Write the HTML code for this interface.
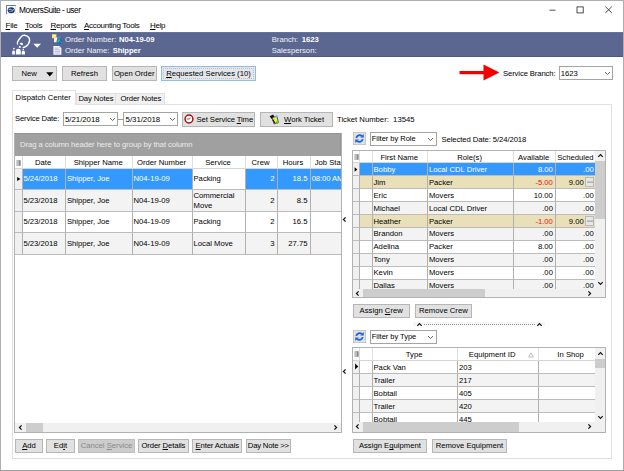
<!DOCTYPE html><html><head><meta charset="utf-8"><title>MoversSuite - user</title><style>
html,body{margin:0;padding:0;}
body{width:624px;height:471px;overflow:hidden;background:#fff;font-family:"Liberation Sans",sans-serif;font-size:7.7px;color:#000;position:relative;}
.a{position:absolute;box-sizing:border-box;white-space:nowrap;}
.t{}
u{text-decoration:underline;text-decoration-thickness:0.6px;text-underline-offset:0.8px;}
.btn{background:#e1e1e1;border:0.8px solid #b6b6b6;display:flex;align-items:center;justify-content:center;}
.btn.dis{background:#cccccc;border-color:#bfbfbf;color:#8a8a8a;}
.btn.foc{border:1px solid #8fbbe6;background:#e3e6ea;}
.cell{position:absolute;box-sizing:border-box;border-right:0.7px solid #b0b0b0;border-bottom:0.7px solid #bcbcbc;display:flex;align-items:center;padding:0 2.2px 0 0.8px;overflow:hidden;white-space:nowrap;}
.cell.r{justify-content:flex-end;}
.cell.c{justify-content:center;}
.hd{background:#fff;border-right-color:#dedede !important;border-bottom-color:#d6d6d6 !important;}
.combo{background:#fff;border:0.8px solid #a4a4a4;display:flex;align-items:center;padding-left:0.8px;font-size:7.5px;letter-spacing:-0.03px;}
.sb{background:#f0f0f0;}
.thumb{background:#cdcdcd;}
</style></head><body>
<div class="a " style="left:0px;top:0px;width:624px;height:471px;background:#fff;"></div>
<div class="a " style="left:0px;top:0px;width:624px;height:32px;background:#fff;"></div>
<div class="a " style="left:1px;top:32px;width:622px;height:25px;background:#5b6790;"></div>
<div class="a " style="left:1px;top:56px;width:622px;height:1px;background:#4d5a87;"></div>
<div class="a " style="left:1px;top:32px;width:622px;height:1px;background:#67739c;"></div>
<div class="a " style="left:0px;top:0px;width:624px;height:1px;background:#b0b0b0;"></div>
<div class="a " style="left:0px;top:0px;width:1px;height:471px;background:#b0b0b0;"></div>
<div class="a " style="left:623px;top:0px;width:1px;height:471px;background:#adadad;"></div>
<div class="a " style="left:0px;top:470px;width:624px;height:1px;background:#9c9c9c;"></div>
<svg class="a" style="left:5.6px;top:4.9px" width="10.4" height="9.6" viewBox="0 0 10.4 9.6"><rect x="0.4" y="0.4" width="9.4" height="8.6" fill="#fff" stroke="#c8d2e2" stroke-width="0.5"/><path d="M0.4 9V0.5H9.8" fill="none" stroke="#3a5a8a" stroke-width="0.8"/><ellipse cx="5.2" cy="5.2" rx="3.5" ry="3" fill="#17356a"/><path d="M2.6 4.6Q4.4 3.6 5.4 4.8T8 4.4" fill="none" stroke="#fff" stroke-width="0.8"/><path d="M3 6.4Q5 7 7 6" fill="none" stroke="#dfe8f4" stroke-width="0.5"/></svg>
<div class="a t " style="left:19px;top:4.3px;height:12px;line-height:12px;font-size:8.3px;letter-spacing:-0.45px;color:#000;">MoversSuite - user</div>
<svg class="a" style="left:540px;top:0" width="84" height="21" viewBox="0 0 84 21"><g stroke="#222" stroke-width="0.8" fill="none"><path d="M9.5 10.2H15.5"/><rect x="37" y="6.9" width="6.2" height="6"/><path d="M65.4 6.7L71.8 12.9M71.8 6.7L65.4 12.9"/></g></svg>
<div class="a t " style="left:5.6px;top:20.1px;height:12px;line-height:12px;font-size:8px;letter-spacing:-0.3px;"><u>F</u>ile</div>
<div class="a t " style="left:25px;top:20.1px;height:12px;line-height:12px;font-size:8px;letter-spacing:-0.3px;"><u>T</u>ools</div>
<div class="a t " style="left:50.6px;top:20.1px;height:12px;line-height:12px;font-size:8px;letter-spacing:-0.3px;"><u>R</u>eports</div>
<div class="a t " style="left:84px;top:20.1px;height:12px;line-height:12px;font-size:8px;letter-spacing:-0.3px;"><u>A</u>ccounting Tools</div>
<div class="a t " style="left:150px;top:20.1px;height:12px;line-height:12px;font-size:8px;letter-spacing:-0.3px;"><u>H</u>elp</div>
<svg class="a" style="left:8px;top:32px" width="39" height="26" viewBox="8 32 39 26">
<g fill="none" stroke="#fff" stroke-width="1.4" stroke-linejoin="round"><path d="M17.6 44.6Q16.6 42.6 18.6 40L21.6 36.2Q23.4 34.6 26.2 35.6Q29.8 37.2 29.6 40.6Q29.2 44.2 25.6 46.6Q23.6 47.8 22.6 47.4"/></g>
<g fill="#fff"><ellipse cx="21.4" cy="43.8" rx="1.7" ry="1" transform="rotate(20 21.4 43.8)"/>
<circle cx="19.8" cy="46.9" r="1.05"/><path d="M15.9 54.6V51Q15.9 48.8 18.4 48.8Q20.8 48.8 20.8 51V54.6Z"/>
<circle cx="13.9" cy="48.6" r="0.85"/><path d="M12.2 54.6V51.8Q12.2 50.6 13.6 50.6Q14.9 50.6 14.9 51.8V54.6Z"/>
<circle cx="23.3" cy="49.5" r="0.85"/><path d="M21.7 54.6V52Q21.7 50.8 23.4 50.8Q25 50.8 25 52V54.6Z"/>
<path d="M33.3 43.7H41.1L37.2 47.7Z"/></g></svg>
<svg class="a" style="left:51px;top:33px" width="12" height="23" viewBox="51 33 12 23">
<rect x="54" y="37.4" width="3.4" height="4.8" fill="#f2f4f8"/><rect x="57.4" y="36.4" width="3.6" height="2.2" fill="#4a80d8"/>
<rect x="52" y="34.2" width="4.4" height="4" fill="#f6e36c"/><rect x="53" y="35" width="2" height="1.6" fill="#fdf6b8"/>
<circle cx="59.5" cy="41.5" r="2.9" fill="#2a62c8"/><path d="M57.4 40.6Q58.6 38.8 60.2 39.6Q60.4 41 59.2 41.6Q58.6 43.4 57.6 42.4Z" fill="#3fc04a"/><path d="M60.8 41.2Q62 41.4 61.8 42.8Q61 43.6 60.6 42.6Z" fill="#3fc04a"/>
<path d="M53.4 46H59.4L61.4 48V54.8H53.4Z" fill="#f6f7fb"/><path d="M59.4 46V48H61.4Z" fill="#b8c0d8"/>
<g stroke="#8a90d8" stroke-width="0.6"><path d="M54.6 48.2H58.6M54.6 49.8H60.2M54.6 51.4H60.2M54.6 53H60.2"/></g></svg>
<div class="a t " style="left:65px;top:34px;height:12px;line-height:12px;color:#fff;color:#f2f3f8;">Order Number:</div>
<div class="a t " style="left:119px;top:34px;height:12px;line-height:12px;color:#fff;letter-spacing:-0.1px"><b>N04-19-09</b></div>
<div class="a t " style="left:65px;top:44.8px;height:12px;line-height:12px;color:#fff;color:#f2f3f8;">Order Name:</div>
<div class="a t " style="left:112.7px;top:44.8px;height:12px;line-height:12px;color:#fff;letter-spacing:-0.1px"><b>Shipper</b></div>
<div class="a t " style="left:271.7px;top:34px;height:12px;line-height:12px;color:#fff;color:#f2f3f8;">Branch:</div>
<div class="a t " style="left:301.7px;top:34px;height:12px;line-height:12px;color:#fff;"><b>1623</b></div>
<div class="a t " style="left:271.7px;top:44.8px;height:12px;line-height:12px;color:#fff;color:#f2f3f8;">Salesperson:</div>
<div class="a btn " style="left:12px;top:66.4px;width:44.6px;height:14.4px;"><span></span></div>
<div class="a t " style="left:21.4px;top:67.6px;height:12px;line-height:12px;">New</div>
<svg class="a" style="left:46px;top:71.6px" width="8" height="5" viewBox="0 0 8 5"><path d="M0.2 0.2H7.4L3.8 4.6Z" fill="#000"/></svg>
<div class="a btn " style="left:62px;top:66.4px;width:45px;height:14.4px;"><span>Refresh</span></div>
<div class="a btn " style="left:111.6px;top:66.4px;width:45.2px;height:14.4px;"><span>Open Order</span></div>
<div class="a btn foc" style="left:160.8px;top:65.8px;width:95.4px;height:15.4px;"><span><u>R</u>equested Services (10)</span></div>
<div class="a " style="left:162.6px;top:67.6px;width:91.8px;height:11.8px;border:0.7px dotted #c0c0c0;"></div>
<svg class="a" style="left:458px;top:62px" width="44" height="22" viewBox="0 0 44 22"><path d="M1.5 9V12.2H25.5V18.6L41.4 10.6L25.5 2.6V9Z" fill="#f50000"/></svg>
<div class="a t " style="left:503px;top:67.9px;height:12px;line-height:12px;letter-spacing:-0.12px">Service Branch:</div>
<div class="a combo" style="left:559px;top:66.4px;width:53.6px;height:14.0px;font-size:7.7px;">1623</div>
<svg class="a" style="left:603.6px;top:70.8px" width="7" height="5" viewBox="0 0 7 5"><path d="M1 1L3.5 3.5L6 1" fill="none" stroke="#444" stroke-width="0.8"/></svg>
<div class="a " style="left:11.5px;top:103.6px;width:600.8px;height:355.8px;background:#fff;border:0.8px solid #e0e0e0;"></div>
<div class="a " style="left:75.6px;top:92.8px;width:40.8px;height:11.2px;background:#f0f0f0;border:0.8px solid #e0e0e0;border-bottom:none;"></div>
<div class="a " style="left:116.4px;top:92.8px;width:48.6px;height:11.2px;background:#f0f0f0;border:0.8px solid #e0e0e0;border-bottom:none;border-left:none;"></div>
<div class="a " style="left:11.5px;top:90.4px;width:64.3px;height:14.2px;background:#fff;border:0.8px solid #e0e0e0;border-bottom:none;"></div>
<div class="a t " style="left:15.6px;top:91.6px;height:12px;line-height:12px;">Dispatch Center</div>
<div class="a t " style="left:78.4px;top:92.8px;height:12px;line-height:12px;letter-spacing:-0.1px">Day Notes</div>
<div class="a t " style="left:120.4px;top:92.8px;height:12px;line-height:12px;letter-spacing:-0.1px">Order Notes</div>
<div class="a t " style="left:15px;top:113.4px;height:12px;line-height:12px;letter-spacing:-0.15px">Service Date:</div>
<div class="a combo" style="left:62.8px;top:112px;width:55.4px;height:14.4px;font-size:7.85px;padding-left:1.2px;">5/21/2018</div>
<svg class="a" style="left:108.6px;top:117.2px" width="7" height="5" viewBox="0 0 7 5"><path d="M1 1L3.5 3.5L6 1" fill="none" stroke="#444" stroke-width="0.8"/></svg>
<div class="a " style="left:118.2px;top:119.2px;width:5.2px;height:0.6px;background:#999;"></div>
<div class="a combo" style="left:123.4px;top:112px;width:54.8px;height:14.4px;font-size:7.85px;padding-left:1.2px;">5/31/2018</div>
<svg class="a" style="left:169.2px;top:117.2px" width="7" height="5" viewBox="0 0 7 5"><path d="M1 1L3.5 3.5L6 1" fill="none" stroke="#444" stroke-width="0.8"/></svg>
<div class="a btn " style="left:182.4px;top:112px;width:72.8px;height:14.6px;"><span></span></div>
<svg class="a" style="left:184px;top:114.4px" width="10" height="10" viewBox="0 0 10 10"><circle cx="5" cy="5" r="3.9" fill="#fff" stroke="#a81414" stroke-width="1.5"/><path d="M5 5H2.8M5 5L6.6 4" stroke="#a81414" stroke-width="0.8"/></svg>
<div class="a t " style="left:196.6px;top:113.7px;height:12px;line-height:12px;letter-spacing:-0.1px">Set Service <u>T</u>ime</div>
<div class="a btn " style="left:260px;top:112px;width:72.6px;height:14.6px;"><span></span></div>
<svg class="a" style="left:269px;top:113.6px" width="11" height="11" viewBox="0 0 11 11"><path d="M0.6 2.2L4.2 0.4L5.6 3.2L2.6 5Z" fill="#111"/><path d="M3.2 3.6L8 2.2L9.4 8.6L5 10Z" fill="#ecec50" stroke="#222" stroke-width="0.7"/><circle cx="7.6" cy="2.6" r="1.3" fill="#58c8d8"/><circle cx="8.2" cy="8.6" r="1.4" fill="#6ab848"/><path d="M3.6 5.6L6 9" stroke="#111" stroke-width="1.1"/></svg>
<div class="a t " style="left:284px;top:113.7px;height:12px;line-height:12px;"><u>W</u>ork Ticket</div>
<div class="a t " style="left:337px;top:113.7px;height:12px;line-height:12px;">Ticket Number:&nbsp; 13545</div>
<div class="a " style="left:14px;top:132.8px;width:327.6px;height:300.2px;background:#fff;border:0.8px solid #b2b2b2;overflow:hidden;"></div>
<div class="a " style="left:14.6px;top:133px;width:326.8px;height:23px;background:#a0a0a0;border-top:1px solid #949494;border-right:1px solid #949494;"></div>
<div class="a t " style="left:20px;top:138.8px;height:12px;line-height:12px;color:#ececec;letter-spacing:-0.075px;">Drag a column header here to group by that column</div>
<div class="a" style="left:0;top:0;width:341px;height:433px;overflow:hidden;">
<div class="cell hd c" style="left:14.6px;top:156px;width:8.0px;height:13.4px;background:#fff;padding-top:1.2px;padding:1px 0 0 1.6px;justify-content:flex-start;"></div>
<div class="cell hd c" style="left:22.6px;top:156px;width:43.5px;height:13.4px;background:#fff;padding-top:1.2px;">Date</div>
<div class="cell hd c" style="left:66.1px;top:156px;width:66.6px;height:13.4px;background:#fff;padding-top:1.2px;">Shipper Name</div>
<div class="cell hd c" style="left:132.7px;top:156px;width:60.0px;height:13.4px;background:#fff;padding-top:1.2px;">Order Number</div>
<div class="cell hd c" style="left:192.7px;top:156px;width:53.0px;height:13.4px;background:#fff;padding-top:1.2px;">Service</div>
<div class="cell hd c" style="left:245.7px;top:156px;width:32.0px;height:13.4px;background:#fff;padding-top:1.2px;">Crew</div>
<div class="cell hd c" style="left:277.7px;top:156px;width:33.0px;height:13.4px;background:#fff;padding-top:1.2px;">Hours</div>
<div class="cell hd " style="left:310.7px;top:156px;width:39.3px;height:13.4px;background:#fff;padding-top:1.2px;padding-left:4px;">Job Sta</div>
<div class="cell" style="left:14.6px;top:169.4px;width:8.000000000000002px;height:21.0px;background:#f0f0f0;padding:0;"><svg width="6" height="6" viewBox="0 0 6 6" style="margin-left:1px"><path d="M1.2 0.9L4.4 3L1.2 5.1Z" fill="#000"/></svg></div>
<div class="cell " style="left:22.6px;top:169.4px;width:43.5px;height:21.0px;background:#3399ff;color:#fff;white-space:normal;line-height:9.8px;">5/24/2018</div>
<div class="cell " style="left:66.1px;top:169.4px;width:66.6px;height:21.0px;background:#3399ff;color:#fff;white-space:normal;line-height:9.8px;">Shipper, Joe</div>
<div class="cell " style="left:132.7px;top:169.4px;width:60.0px;height:21.0px;background:#3399ff;color:#fff;white-space:normal;line-height:9.8px;">N04-19-09</div>
<div class="cell " style="left:192.7px;top:169.4px;width:53.0px;height:21.0px;background:#fff;color:#000;white-space:normal;line-height:9.8px;">Packing</div>
<div class="cell r" style="left:245.7px;top:169.4px;width:32.0px;height:21.0px;background:#3399ff;color:#fff;white-space:normal;line-height:9.8px;">2</div>
<div class="cell r" style="left:277.7px;top:169.4px;width:33.0px;height:21.0px;background:#3399ff;color:#fff;white-space:normal;line-height:9.8px;">18.5</div>
<div class="cell " style="left:310.7px;top:169.4px;width:39.3px;height:21.0px;background:#3399ff;color:#fff;white-space:normal;line-height:9.8px;padding-left:1px;letter-spacing:-0.1px;">08:00 AM</div>
<div class="cell" style="left:14.6px;top:190.4px;width:8.000000000000002px;height:21.4px;background:#f0f0f0;padding:0;"></div>
<div class="cell " style="left:22.6px;top:190.4px;width:43.5px;height:21.4px;background:#f3f3f3;color:#000;white-space:normal;line-height:9.8px;">5/23/2018</div>
<div class="cell " style="left:66.1px;top:190.4px;width:66.6px;height:21.4px;background:#f3f3f3;color:#000;white-space:normal;line-height:9.8px;">Shipper, Joe</div>
<div class="cell " style="left:132.7px;top:190.4px;width:60.0px;height:21.4px;background:#f3f3f3;color:#000;white-space:normal;line-height:9.8px;">N04-19-09</div>
<div class="cell " style="left:192.7px;top:190.4px;width:53.0px;height:21.4px;background:#f3f3f3;color:#000;white-space:normal;line-height:9.8px;">Commercial<br>Move</div>
<div class="cell r" style="left:245.7px;top:190.4px;width:32.0px;height:21.4px;background:#f3f3f3;color:#000;white-space:normal;line-height:9.8px;">2</div>
<div class="cell r" style="left:277.7px;top:190.4px;width:33.0px;height:21.4px;background:#f3f3f3;color:#000;white-space:normal;line-height:9.8px;">8.5</div>
<div class="cell " style="left:310.7px;top:190.4px;width:39.3px;height:21.4px;background:#f3f3f3;color:#000;white-space:normal;line-height:9.8px;padding-left:1px;letter-spacing:-0.1px;"></div>
<div class="cell" style="left:14.6px;top:211.8px;width:8.000000000000002px;height:21.5px;background:#f0f0f0;padding:0;"></div>
<div class="cell " style="left:22.6px;top:211.8px;width:43.5px;height:21.5px;background:#fff;color:#000;white-space:normal;line-height:9.8px;">5/23/2018</div>
<div class="cell " style="left:66.1px;top:211.8px;width:66.6px;height:21.5px;background:#fff;color:#000;white-space:normal;line-height:9.8px;">Shipper, Joe</div>
<div class="cell " style="left:132.7px;top:211.8px;width:60.0px;height:21.5px;background:#fff;color:#000;white-space:normal;line-height:9.8px;">N04-19-09</div>
<div class="cell " style="left:192.7px;top:211.8px;width:53.0px;height:21.5px;background:#fff;color:#000;white-space:normal;line-height:9.8px;">Packing</div>
<div class="cell r" style="left:245.7px;top:211.8px;width:32.0px;height:21.5px;background:#fff;color:#000;white-space:normal;line-height:9.8px;">2</div>
<div class="cell r" style="left:277.7px;top:211.8px;width:33.0px;height:21.5px;background:#fff;color:#000;white-space:normal;line-height:9.8px;">16.5</div>
<div class="cell " style="left:310.7px;top:211.8px;width:39.3px;height:21.5px;background:#fff;color:#000;white-space:normal;line-height:9.8px;padding-left:1px;letter-spacing:-0.1px;"></div>
<div class="cell" style="left:14.6px;top:233.3px;width:8.000000000000002px;height:21.4px;background:#f0f0f0;padding:0;"></div>
<div class="cell " style="left:22.6px;top:233.3px;width:43.5px;height:21.4px;background:#f3f3f3;color:#000;white-space:normal;line-height:9.8px;">5/23/2018</div>
<div class="cell " style="left:66.1px;top:233.3px;width:66.6px;height:21.4px;background:#f3f3f3;color:#000;white-space:normal;line-height:9.8px;">Shipper, Joe</div>
<div class="cell " style="left:132.7px;top:233.3px;width:60.0px;height:21.4px;background:#f3f3f3;color:#000;white-space:normal;line-height:9.8px;">N04-19-09</div>
<div class="cell " style="left:192.7px;top:233.3px;width:53.0px;height:21.4px;background:#f3f3f3;color:#000;white-space:normal;line-height:9.8px;">Local Move</div>
<div class="cell r" style="left:245.7px;top:233.3px;width:32.0px;height:21.4px;background:#f3f3f3;color:#000;white-space:normal;line-height:9.8px;">3</div>
<div class="cell r" style="left:277.7px;top:233.3px;width:33.0px;height:21.4px;background:#f3f3f3;color:#000;white-space:normal;line-height:9.8px;">27.75</div>
<div class="cell " style="left:310.7px;top:233.3px;width:39.3px;height:21.4px;background:#f3f3f3;color:#000;white-space:normal;line-height:9.8px;padding-left:1px;letter-spacing:-0.1px;"></div>
</div>
<svg class="a" style="left:16.2px;top:159.6px" width="5" height="6" viewBox="0 0 5 6"><path d="M3.9 0.2V5.8" stroke="#222" stroke-width="0.9"/><path d="M0.4 1H3M0.4 3H3M0.4 5H3" stroke="#555" stroke-width="0.8" fill="none"/></svg>
<div class="a sb" style="left:14.6px;top:422.8px;width:326.4px;height:9.6px;"></div>
<div class="a thumb" style="left:25.8px;top:422.8px;width:17.2px;height:9.6px;"></div>
<svg class="a" style="left:17.6px;top:424.2px" width="5" height="7" viewBox="0 0 5 7"><path d="M3.6 1.3L1.4 3.5L3.6 5.7" fill="none" stroke="#111" stroke-width="1.2"/></svg>
<svg class="a" style="left:333.4px;top:424.2px" width="5" height="7" viewBox="0 0 5 7"><path d="M1.4 1.3L3.6 3.5L1.4 5.7" fill="none" stroke="#111" stroke-width="1.2"/></svg>
<svg class="a" style="left:342.4px;top:215.8px" width="5" height="7" viewBox="0 0 5 7"><path d="M3.6 1.3L1.4 3.5L3.6 5.7" fill="none" stroke="#111" stroke-width="1.2"/></svg>
<svg class="a" style="left:342.4px;top:368px" width="5" height="7" viewBox="0 0 5 7"><path d="M3.6 1.3L1.4 3.5L3.6 5.7" fill="none" stroke="#111" stroke-width="1.2"/></svg>
<svg class="a" style="left:353px;top:132.2px" width="13" height="13" viewBox="0 0 13 13"><rect x="0.3" y="0.3" width="12.4" height="12.4" fill="#e1e1e1" stroke="#b6b6b6" stroke-width="0.7"/><g fill="none" stroke="#1a66dc" stroke-width="1.9"><path d="M3.3 5.9A3.3 3.3 0 0 1 8.9 4.1"/><path d="M9.7 7.1A3.3 3.3 0 0 1 4.1 8.9"/></g><path d="M7.2 5.4L10.9 5.6L10.6 1.9Z" fill="#1a66dc"/><path d="M5.8 7.6L2.1 7.4L2.4 11.1Z" fill="#1a66dc"/></svg>
<div class="a combo" style="left:370px;top:132px;width:66.8px;height:13.6px;">Filter by Role</div>
<svg class="a" style="left:427px;top:136.6px" width="7" height="5" viewBox="0 0 7 5"><path d="M1 1L3.5 3.5L6 1" fill="none" stroke="#444" stroke-width="0.8"/></svg>
<div class="a t " style="left:441.4px;top:134.1px;height:12px;line-height:12px;letter-spacing:-0.08px">Selected Date: 5/24/2018</div>
<div class="a " style="left:351.6px;top:150.0px;width:254.2px;height:148.4px;background:#fff;"></div>
<div class="a" style="left:352px;top:150.4px;width:242.8px;height:138.2px;overflow:hidden;">
<div class="cell hd c" style="left:0px;top:0;width:8.1px;height:13.0px;background:#fff;padding-top:1.6px;padding:1px 0 0 2.6px;justify-content:flex-start;"></div>
<div class="cell hd c" style="left:8.100000000000023px;top:0;width:12.6px;height:13.0px;background:#fff;padding-top:1.6px;"></div>
<div class="cell hd c" style="left:20.69999999999999px;top:0;width:55.4px;height:13.0px;background:#fff;padding-top:1.6px;">First Name</div>
<div class="cell hd c" style="left:76.10000000000002px;top:0;width:85.5px;height:13.0px;background:#fff;padding-top:1.6px;">Role(s)</div>
<div class="cell hd c" style="left:161.60000000000002px;top:0;width:42.5px;height:13.0px;background:#fff;padding-top:1.6px;">Available</div>
<div class="cell hd c" style="left:204.10000000000002px;top:0;width:40.9px;height:13.0px;background:#fff;padding-top:1.6px;">Scheduled</div>
<div class="cell" style="left:0;top:13.0px;width:8.1px;height:12.92px;background:#f0f0f0;padding:0;"><svg width=6 height=7 viewBox="0 0 6 7" style="margin-left:0.8px"><path d="M1.6 1.2L4.4 3.5L1.6 5.8Z" fill="#000"/></svg></div>
<div class="cell " style="left:8.100000000000023px;top:13.0px;width:12.6px;height:12.92px;background:#3399ff;color:#fff;padding-top:0px;"></div>
<div class="cell " style="left:20.69999999999999px;top:13.0px;width:55.4px;height:12.92px;background:#3399ff;color:#fff;padding-top:0px;">Bobby</div>
<div class="cell " style="left:76.10000000000002px;top:13.0px;width:85.5px;height:12.92px;background:#3399ff;color:#fff;padding-top:0px;">Local CDL Driver</div>
<div class="cell r" style="left:161.60000000000002px;top:13.0px;width:42.5px;height:12.92px;background:#3399ff;color:#fff;padding-top:0px;">8.00</div>
<div class="cell r" style="left:204.10000000000002px;top:13.0px;width:40.9px;height:12.92px;background:#3399ff;color:#fff;padding-top:0px;">.00</div>
<div class="cell" style="left:0;top:25.92px;width:8.1px;height:12.92px;background:#f0f0f0;padding:0;"></div>
<div class="cell " style="left:8.100000000000023px;top:25.92px;width:12.6px;height:12.92px;background:#e9e0ba;color:#000;padding-top:0px;"></div>
<div class="cell " style="left:20.69999999999999px;top:25.92px;width:55.4px;height:12.92px;background:#e9e0ba;color:#000;padding-top:0px;">Jim</div>
<div class="cell " style="left:76.10000000000002px;top:25.92px;width:85.5px;height:12.92px;background:#e9e0ba;color:#000;padding-top:0px;">Packer</div>
<div class="cell r" style="left:161.60000000000002px;top:25.92px;width:42.5px;height:12.92px;background:#e9e0ba;color:#000;padding-top:0px;color:#f01010;">-5.00</div>
<div class="cell r" style="left:204.10000000000002px;top:25.92px;width:40.9px;height:12.92px;background:#e9e0ba;color:#000;padding-top:0px;">9.00<span style="display:inline-block;width:9px;height:9.6px;margin-left:1.6px;margin-right:-0.5px;background:#e6e6e6;border:0.6px solid #b8b8b8;box-sizing:border-box;position:relative;"><svg style="position:absolute;left:1.2px;top:2.6px" width="6" height="2" viewBox="0 0 6 2"><circle cx="1" cy="1" r="0.6" fill="#333"/><circle cx="3" cy="1" r="0.6" fill="#333"/><circle cx="5" cy="1" r="0.6" fill="#333"/></svg></span></div>
<div class="cell" style="left:0;top:38.84px;width:8.1px;height:12.92px;background:#f0f0f0;padding:0;"></div>
<div class="cell " style="left:8.100000000000023px;top:38.84px;width:12.6px;height:12.92px;background:#fff;color:#000;padding-top:0px;"></div>
<div class="cell " style="left:20.69999999999999px;top:38.84px;width:55.4px;height:12.92px;background:#fff;color:#000;padding-top:0px;">Eric</div>
<div class="cell " style="left:76.10000000000002px;top:38.84px;width:85.5px;height:12.92px;background:#fff;color:#000;padding-top:0px;">Movers</div>
<div class="cell r" style="left:161.60000000000002px;top:38.84px;width:42.5px;height:12.92px;background:#fff;color:#000;padding-top:0px;">10.00</div>
<div class="cell r" style="left:204.10000000000002px;top:38.84px;width:40.9px;height:12.92px;background:#fff;color:#000;padding-top:0px;">.00</div>
<div class="cell" style="left:0;top:51.76px;width:8.1px;height:12.92px;background:#f0f0f0;padding:0;"></div>
<div class="cell " style="left:8.100000000000023px;top:51.76px;width:12.6px;height:12.92px;background:#f3f3f3;color:#000;padding-top:0px;"></div>
<div class="cell " style="left:20.69999999999999px;top:51.76px;width:55.4px;height:12.92px;background:#f3f3f3;color:#000;padding-top:0px;">Michael</div>
<div class="cell " style="left:76.10000000000002px;top:51.76px;width:85.5px;height:12.92px;background:#f3f3f3;color:#000;padding-top:0px;">Local CDL Driver</div>
<div class="cell r" style="left:161.60000000000002px;top:51.76px;width:42.5px;height:12.92px;background:#f3f3f3;color:#000;padding-top:0px;">.00</div>
<div class="cell r" style="left:204.10000000000002px;top:51.76px;width:40.9px;height:12.92px;background:#f3f3f3;color:#000;padding-top:0px;">.00</div>
<div class="cell" style="left:0;top:64.68px;width:8.1px;height:12.92px;background:#f0f0f0;padding:0;"></div>
<div class="cell " style="left:8.100000000000023px;top:64.68px;width:12.6px;height:12.92px;background:#e9e0ba;color:#000;padding-top:0px;"></div>
<div class="cell " style="left:20.69999999999999px;top:64.68px;width:55.4px;height:12.92px;background:#e9e0ba;color:#000;padding-top:0px;">Heather</div>
<div class="cell " style="left:76.10000000000002px;top:64.68px;width:85.5px;height:12.92px;background:#e9e0ba;color:#000;padding-top:0px;">Packer</div>
<div class="cell r" style="left:161.60000000000002px;top:64.68px;width:42.5px;height:12.92px;background:#e9e0ba;color:#000;padding-top:0px;color:#f01010;">-1.00</div>
<div class="cell r" style="left:204.10000000000002px;top:64.68px;width:40.9px;height:12.92px;background:#e9e0ba;color:#000;padding-top:0px;">9.00<span style="display:inline-block;width:9px;height:9.6px;margin-left:1.6px;margin-right:-0.5px;background:#e6e6e6;border:0.6px solid #b8b8b8;box-sizing:border-box;position:relative;"><svg style="position:absolute;left:1.2px;top:2.6px" width="6" height="2" viewBox="0 0 6 2"><circle cx="1" cy="1" r="0.6" fill="#333"/><circle cx="3" cy="1" r="0.6" fill="#333"/><circle cx="5" cy="1" r="0.6" fill="#333"/></svg></span></div>
<div class="cell" style="left:0;top:77.6px;width:8.1px;height:12.92px;background:#f0f0f0;padding:0;"></div>
<div class="cell " style="left:8.100000000000023px;top:77.6px;width:12.6px;height:12.92px;background:#f3f3f3;color:#000;padding-top:0px;"></div>
<div class="cell " style="left:20.69999999999999px;top:77.6px;width:55.4px;height:12.92px;background:#f3f3f3;color:#000;padding-top:0px;">Brandon</div>
<div class="cell " style="left:76.10000000000002px;top:77.6px;width:85.5px;height:12.92px;background:#f3f3f3;color:#000;padding-top:0px;">Movers</div>
<div class="cell r" style="left:161.60000000000002px;top:77.6px;width:42.5px;height:12.92px;background:#f3f3f3;color:#000;padding-top:0px;">.00</div>
<div class="cell r" style="left:204.10000000000002px;top:77.6px;width:40.9px;height:12.92px;background:#f3f3f3;color:#000;padding-top:0px;">.00</div>
<div class="cell" style="left:0;top:90.52px;width:8.1px;height:12.92px;background:#f0f0f0;padding:0;"></div>
<div class="cell " style="left:8.100000000000023px;top:90.52px;width:12.6px;height:12.92px;background:#fff;color:#000;padding-top:0px;"></div>
<div class="cell " style="left:20.69999999999999px;top:90.52px;width:55.4px;height:12.92px;background:#fff;color:#000;padding-top:0px;">Adelina</div>
<div class="cell " style="left:76.10000000000002px;top:90.52px;width:85.5px;height:12.92px;background:#fff;color:#000;padding-top:0px;">Packer</div>
<div class="cell r" style="left:161.60000000000002px;top:90.52px;width:42.5px;height:12.92px;background:#fff;color:#000;padding-top:0px;">8.00</div>
<div class="cell r" style="left:204.10000000000002px;top:90.52px;width:40.9px;height:12.92px;background:#fff;color:#000;padding-top:0px;">.00</div>
<div class="cell" style="left:0;top:103.44px;width:8.1px;height:12.92px;background:#f0f0f0;padding:0;"></div>
<div class="cell " style="left:8.100000000000023px;top:103.44px;width:12.6px;height:12.92px;background:#f3f3f3;color:#000;padding-top:0px;"></div>
<div class="cell " style="left:20.69999999999999px;top:103.44px;width:55.4px;height:12.92px;background:#f3f3f3;color:#000;padding-top:0px;">Tony</div>
<div class="cell " style="left:76.10000000000002px;top:103.44px;width:85.5px;height:12.92px;background:#f3f3f3;color:#000;padding-top:0px;">Movers</div>
<div class="cell r" style="left:161.60000000000002px;top:103.44px;width:42.5px;height:12.92px;background:#f3f3f3;color:#000;padding-top:0px;">.00</div>
<div class="cell r" style="left:204.10000000000002px;top:103.44px;width:40.9px;height:12.92px;background:#f3f3f3;color:#000;padding-top:0px;">.00</div>
<div class="cell" style="left:0;top:116.36px;width:8.1px;height:12.92px;background:#f0f0f0;padding:0;"></div>
<div class="cell " style="left:8.100000000000023px;top:116.36px;width:12.6px;height:12.92px;background:#fff;color:#000;padding-top:0px;"></div>
<div class="cell " style="left:20.69999999999999px;top:116.36px;width:55.4px;height:12.92px;background:#fff;color:#000;padding-top:0px;">Kevin</div>
<div class="cell " style="left:76.10000000000002px;top:116.36px;width:85.5px;height:12.92px;background:#fff;color:#000;padding-top:0px;">Movers</div>
<div class="cell r" style="left:161.60000000000002px;top:116.36px;width:42.5px;height:12.92px;background:#fff;color:#000;padding-top:0px;">.00</div>
<div class="cell r" style="left:204.10000000000002px;top:116.36px;width:40.9px;height:12.92px;background:#fff;color:#000;padding-top:0px;">.00</div>
<div class="cell" style="left:0;top:129.28px;width:8.1px;height:12.92px;background:#f0f0f0;padding:0;"></div>
<div class="cell " style="left:8.100000000000023px;top:129.28px;width:12.6px;height:12.92px;background:#f3f3f3;color:#000;padding-top:0px;"></div>
<div class="cell " style="left:20.69999999999999px;top:129.28px;width:55.4px;height:12.92px;background:#f3f3f3;color:#000;padding-top:0px;">Dallas</div>
<div class="cell " style="left:76.10000000000002px;top:129.28px;width:85.5px;height:12.92px;background:#f3f3f3;color:#000;padding-top:0px;">Movers</div>
<div class="cell r" style="left:161.60000000000002px;top:129.28px;width:42.5px;height:12.92px;background:#f3f3f3;color:#000;padding-top:0px;">.00</div>
<div class="cell r" style="left:204.10000000000002px;top:129.28px;width:40.9px;height:12.92px;background:#f3f3f3;color:#000;padding-top:0px;">.00</div>
</div>
<div class="a sb" style="left:594.8px;top:150.4px;width:10.6px;height:138.2px;"></div>
<div class="a thumb" style="left:594.8px;top:161px;width:10.6px;height:58px;"></div>
<svg class="a" style="left:596.8px;top:153.4px" width="7" height="5" viewBox="0 0 7 5"><path d="M1.3 3.8L3.5 1.6L5.7 3.8" fill="none" stroke="#111" stroke-width="1.2"/></svg>
<svg class="a" style="left:596.8px;top:281.20000000000005px" width="7" height="5" viewBox="0 0 7 5"><path d="M1.3 1.2L3.5 3.4L5.7 1.2" fill="none" stroke="#111" stroke-width="1.2"/></svg>
<div class="a sb" style="left:352px;top:288.6px;width:253.4px;height:9.4px;"></div>
<div class="a thumb" style="left:363px;top:288.6px;width:122px;height:9.4px;"></div>
<svg class="a" style="left:355.4px;top:289.90000000000003px" width="5" height="7" viewBox="0 0 5 7"><path d="M3.6 1.3L1.4 3.5L3.6 5.7" fill="none" stroke="#111" stroke-width="1.2"/></svg>
<svg class="a" style="left:587.4px;top:289.90000000000003px" width="5" height="7" viewBox="0 0 5 7"><path d="M1.4 1.3L3.6 3.5L1.4 5.7" fill="none" stroke="#111" stroke-width="1.2"/></svg>
<div class="a " style="left:351.6px;top:150.0px;width:254.2px;height:148.4px;border:0.8px solid #b2b2b2;"></div>
<svg class="a" style="left:353.8px;top:154.20000000000002px" width="5" height="6" viewBox="0 0 5 6"><path d="M3.9 0.2V5.8" stroke="#222" stroke-width="0.9"/><path d="M0.4 1H3M0.4 3H3M0.4 5H3" stroke="#555" stroke-width="0.8" fill="none"/></svg>
<div class="a btn " style="left:352.8px;top:303.8px;width:56.8px;height:13.8px;"><span>Assign <u>C</u>rew</span></div>
<div class="a btn " style="left:415px;top:303.8px;width:56.8px;height:13.8px;"><span>Remove Crew</span></div>
<div class="a " style="left:413px;top:322.4px;width:132px;height:3.8px;background:#f6f6f6;"></div>
<div class="a " style="left:424px;top:324px;width:111px;height:0.6px;border-top:0.7px dotted #999;"></div>
<svg class="a" style="left:415.6px;top:321.6px" width="7" height="5" viewBox="0 0 7 5"><path d="M1.3 3.8L3.5 1.6L5.7 3.8" fill="none" stroke="#111" stroke-width="1.2"/></svg>
<svg class="a" style="left:536.4px;top:321.6px" width="7" height="5" viewBox="0 0 7 5"><path d="M1.3 3.8L3.5 1.6L5.7 3.8" fill="none" stroke="#111" stroke-width="1.2"/></svg>
<svg class="a" style="left:353px;top:330.4px" width="13" height="13" viewBox="0 0 13 13"><rect x="0.3" y="0.3" width="12.4" height="12.4" fill="#e1e1e1" stroke="#b6b6b6" stroke-width="0.7"/><g fill="none" stroke="#1a66dc" stroke-width="1.9"><path d="M3.3 5.9A3.3 3.3 0 0 1 8.9 4.1"/><path d="M9.7 7.1A3.3 3.3 0 0 1 4.1 8.9"/></g><path d="M7.2 5.4L10.9 5.6L10.6 1.9Z" fill="#1a66dc"/><path d="M5.8 7.6L2.1 7.4L2.4 11.1Z" fill="#1a66dc"/></svg>
<div class="a combo" style="left:370px;top:330px;width:66.8px;height:13.8px;">Filter by Type</div>
<svg class="a" style="left:427px;top:334.8px" width="7" height="5" viewBox="0 0 7 5"><path d="M1 1L3.5 3.5L6 1" fill="none" stroke="#444" stroke-width="0.8"/></svg>
<div class="a " style="left:351.6px;top:347.20000000000005px;width:254.2px;height:86.0px;background:#fff;"></div>
<div class="a" style="left:352px;top:347.6px;width:242.8px;height:74.4px;overflow:hidden;">
<div class="cell hd c" style="left:0px;top:0;width:8.1px;height:13.2px;background:#fff;padding-top:1.6px;padding:1px 0 0 2.6px;justify-content:flex-start;"></div>
<div class="cell hd c" style="left:8.100000000000023px;top:0;width:12.6px;height:13.2px;background:#fff;padding-top:1.6px;"></div>
<div class="cell hd c" style="left:20.69999999999999px;top:0;width:85.4px;height:13.2px;background:#fff;padding-top:1.6px;">Type</div>
<div class="cell hd c" style="left:106.10000000000002px;top:0;width:80.5px;height:13.2px;background:#fff;padding-top:1.6px;"><span style="margin-right:10px">Equipment ID</span><svg class="a" style="right:3.4px;top:4.4px" width="6" height="6" viewBox="0 0 6 6"><path d="M0.6 5L3 0.8L5.4 5Z" fill="none" stroke="#999" stroke-width="0.6"/></svg></div>
<div class="cell hd c" style="left:186.60000000000002px;top:0;width:66.4px;height:13.2px;background:#fff;padding-top:1.6px;">In Shop</div>
<div class="cell" style="left:0;top:13.2px;width:8.1px;height:13.05px;background:#f0f0f0;padding:0;"><svg width=6 height=7 viewBox="0 0 6 7" style="margin-left:1.6px"><path d="M1.2 0.3L4.7 3.5L1.2 6.7Z" fill="#000"/></svg></div>
<div class="cell " style="left:8.100000000000023px;top:13.2px;width:12.6px;height:13.05px;background:#fff;color:#000;padding-top:0.9px;"></div>
<div class="cell " style="left:20.69999999999999px;top:13.2px;width:85.4px;height:13.05px;background:#fff;color:#000;padding-top:0.9px;">Pack Van</div>
<div class="cell " style="left:106.10000000000002px;top:13.2px;width:80.5px;height:13.05px;background:#fff;color:#000;padding-top:0.9px;">203</div>
<div class="cell " style="left:186.60000000000002px;top:13.2px;width:66.4px;height:13.05px;background:#fff;color:#000;padding-top:0.9px;"></div>
<div class="cell" style="left:0;top:26.25px;width:8.1px;height:13.05px;background:#f0f0f0;padding:0;"></div>
<div class="cell " style="left:8.100000000000023px;top:26.25px;width:12.6px;height:13.05px;background:#f3f3f3;color:#000;padding-top:0.9px;"></div>
<div class="cell " style="left:20.69999999999999px;top:26.25px;width:85.4px;height:13.05px;background:#f3f3f3;color:#000;padding-top:0.9px;">Trailer</div>
<div class="cell " style="left:106.10000000000002px;top:26.25px;width:80.5px;height:13.05px;background:#f3f3f3;color:#000;padding-top:0.9px;">217</div>
<div class="cell " style="left:186.60000000000002px;top:26.25px;width:66.4px;height:13.05px;background:#f3f3f3;color:#000;padding-top:0.9px;"></div>
<div class="cell" style="left:0;top:39.3px;width:8.1px;height:13.05px;background:#f0f0f0;padding:0;"></div>
<div class="cell " style="left:8.100000000000023px;top:39.3px;width:12.6px;height:13.05px;background:#fff;color:#000;padding-top:0.9px;"></div>
<div class="cell " style="left:20.69999999999999px;top:39.3px;width:85.4px;height:13.05px;background:#fff;color:#000;padding-top:0.9px;">Bobtail</div>
<div class="cell " style="left:106.10000000000002px;top:39.3px;width:80.5px;height:13.05px;background:#fff;color:#000;padding-top:0.9px;">405</div>
<div class="cell " style="left:186.60000000000002px;top:39.3px;width:66.4px;height:13.05px;background:#fff;color:#000;padding-top:0.9px;"></div>
<div class="cell" style="left:0;top:52.35px;width:8.1px;height:13.05px;background:#f0f0f0;padding:0;"></div>
<div class="cell " style="left:8.100000000000023px;top:52.35px;width:12.6px;height:13.05px;background:#f3f3f3;color:#000;padding-top:0.9px;"></div>
<div class="cell " style="left:20.69999999999999px;top:52.35px;width:85.4px;height:13.05px;background:#f3f3f3;color:#000;padding-top:0.9px;">Trailer</div>
<div class="cell " style="left:106.10000000000002px;top:52.35px;width:80.5px;height:13.05px;background:#f3f3f3;color:#000;padding-top:0.9px;">420</div>
<div class="cell " style="left:186.60000000000002px;top:52.35px;width:66.4px;height:13.05px;background:#f3f3f3;color:#000;padding-top:0.9px;"></div>
<div class="cell" style="left:0;top:65.4px;width:8.1px;height:13.05px;background:#f0f0f0;padding:0;"></div>
<div class="cell " style="left:8.100000000000023px;top:65.4px;width:12.6px;height:13.05px;background:#fff;color:#000;padding-top:0.9px;"></div>
<div class="cell " style="left:20.69999999999999px;top:65.4px;width:85.4px;height:13.05px;background:#fff;color:#000;padding-top:0.9px;">Bobtail</div>
<div class="cell " style="left:106.10000000000002px;top:65.4px;width:80.5px;height:13.05px;background:#fff;color:#000;padding-top:0.9px;">445</div>
<div class="cell " style="left:186.60000000000002px;top:65.4px;width:66.4px;height:13.05px;background:#fff;color:#000;padding-top:0.9px;"></div>
</div>
<div class="a sb" style="left:594.8px;top:347.6px;width:10.6px;height:74.4px;"></div>
<div class="a thumb" style="left:594.8px;top:358.8px;width:10.6px;height:9.2px;"></div>
<svg class="a" style="left:596.8px;top:350.6px" width="7" height="5" viewBox="0 0 7 5"><path d="M1.3 3.8L3.5 1.6L5.7 3.8" fill="none" stroke="#111" stroke-width="1.2"/></svg>
<svg class="a" style="left:596.8px;top:414.6px" width="7" height="5" viewBox="0 0 7 5"><path d="M1.3 1.2L3.5 3.4L5.7 1.2" fill="none" stroke="#111" stroke-width="1.2"/></svg>
<div class="a sb" style="left:352px;top:422px;width:253.4px;height:10.8px;"></div>
<div class="a thumb" style="left:363px;top:422px;width:156px;height:10.8px;"></div>
<svg class="a" style="left:355.4px;top:423.3px" width="5" height="7" viewBox="0 0 5 7"><path d="M3.6 1.3L1.4 3.5L3.6 5.7" fill="none" stroke="#111" stroke-width="1.2"/></svg>
<svg class="a" style="left:587.4px;top:423.3px" width="5" height="7" viewBox="0 0 5 7"><path d="M1.4 1.3L3.6 3.5L1.4 5.7" fill="none" stroke="#111" stroke-width="1.2"/></svg>
<div class="a " style="left:351.6px;top:347.20000000000005px;width:254.2px;height:86.0px;border:0.8px solid #b2b2b2;"></div>
<svg class="a" style="left:353.8px;top:351.40000000000003px" width="5" height="6" viewBox="0 0 5 6"><path d="M3.9 0.2V5.8" stroke="#222" stroke-width="0.9"/><path d="M0.4 1H3M0.4 3H3M0.4 5H3" stroke="#555" stroke-width="0.8" fill="none"/></svg>
<div class="a btn " style="left:15px;top:439px;width:28px;height:13.8px;"><span><u>A</u>dd</span></div>
<div class="a btn " style="left:46.2px;top:439px;width:28.4px;height:13.8px;"><span>Ed<u>i</u>t</span></div>
<div class="a btn dis" style="left:78px;top:439px;width:57px;height:13.8px;"><span>Cancel <u>S</u>ervice</span></div>
<div class="a btn " style="left:138.2px;top:439px;width:50.4px;height:13.8px;letter-spacing:-0.1px"><span>Order <u>D</u>etails</span></div>
<div class="a btn " style="left:192.2px;top:439px;width:50.2px;height:13.8px;letter-spacing:-0.15px"><span><u>E</u>nter Actuals</span></div>
<div class="a btn " style="left:245.6px;top:439px;width:45.4px;height:13.8px;letter-spacing:-0.2px"><span>Day Note &gt;&gt;</span></div>
<div class="a btn " style="left:352.8px;top:439px;width:74.2px;height:13.8px;"><span>Assign E<u>q</u>uipment</span></div>
<div class="a btn " style="left:432px;top:439px;width:74.8px;height:13.8px;"><span>Remove Equipment</span></div>
</body></html>
